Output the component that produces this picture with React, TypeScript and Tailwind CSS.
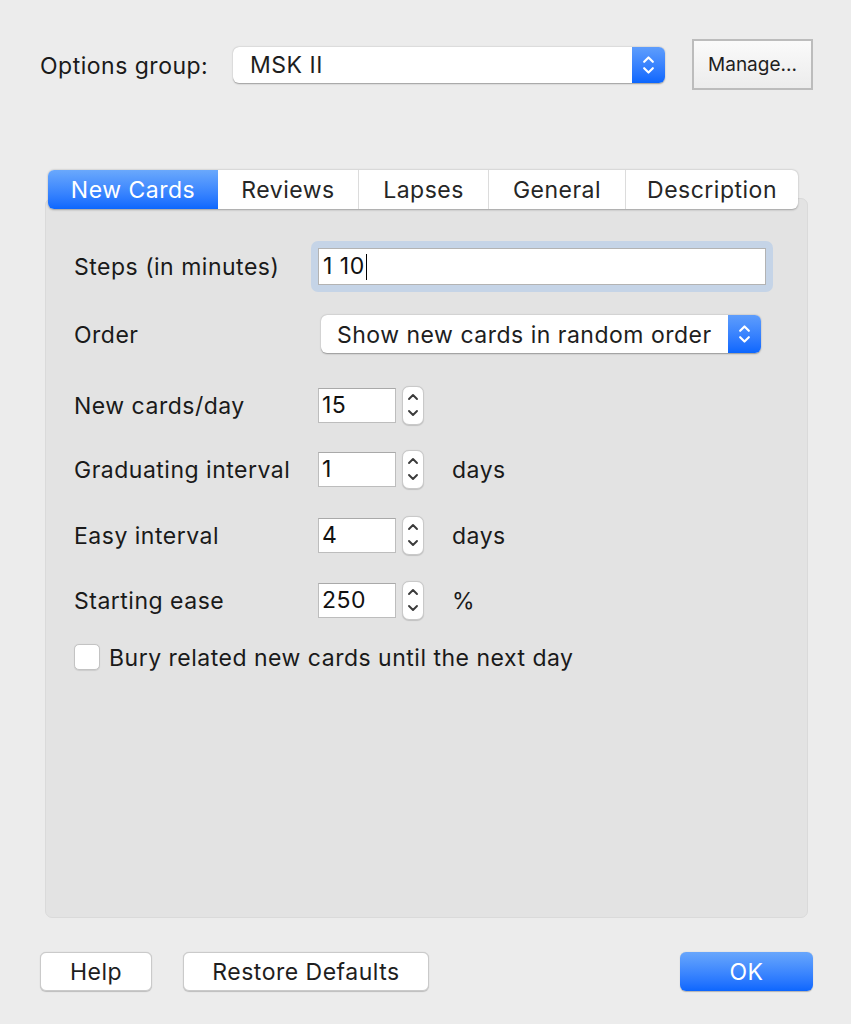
import React from "react";

const FONT = { fontFamily: "Inter, 'Noto Sans', 'Liberation Sans', sans-serif" };

function UpDown({ color = "white", w = 12, h = 22, sw = 1.8 }: { color?: string; w?: number; h?: number; sw?: number }) {
  return (
    <svg width={w} height={h} viewBox="0 0 12 22" fill="none">
      <path d="M2 8 L6 4 L10 8" stroke={color} strokeWidth={sw} strokeLinecap="round" strokeLinejoin="round" />
      <path d="M2 14 L6 18 L10 14" stroke={color} strokeWidth={sw} strokeLinecap="round" strokeLinejoin="round" />
    </svg>
  );
}

function PopUp({ value, width, height, textPad }: { value: string; width: number; height: number; textPad: number }) {
  return (
    <div
      className="flex items-stretch rounded-[6px] bg-white shadow-[0_0.5px_1.5px_rgba(0,0,0,0.35)] overflow-hidden"
      style={{ width, height }}
    >
      <div className="flex flex-1 items-center pt-[2px] text-[23px] text-[#1e1e1e]" style={{ paddingLeft: textPad }}>
        {value}
      </div>
      <div className="flex w-[33px] items-center justify-center bg-gradient-to-b from-[#5e9dfc] to-[#0a66fe]">
        <UpDown w={13} h={24} sw={2} />
      </div>
    </div>
  );
}

function Stepper() {
  return (
    <div className="flex h-[39px] w-[22px] items-center justify-center rounded-[7px] border border-[#c9c9c9] bg-white shadow-[0_0.5px_1px_rgba(0,0,0,0.15)]">
      <svg width="12" height="30" viewBox="0 0 12 30" fill="none">
        <path d="M2 9 L6 5 L10 9" stroke="#3a3a3a" strokeWidth="1.9" strokeLinecap="round" strokeLinejoin="round" />
        <path d="M2 21 L6 25 L10 21" stroke="#3a3a3a" strokeWidth="1.9" strokeLinecap="round" strokeLinejoin="round" />
      </svg>
    </div>
  );
}

function NumberRow({ label, value, unit, mt }: { label: string; value: string; unit?: string; mt: string }) {
  return (
    <div className={`flex h-[40px] items-center ${mt}`}>
      <div className="w-[244px] pt-[2px] text-[23px] text-[#1a1a1a]">{label}</div>
      <div className="flex h-[35px] w-[78px] items-center border border-[#bdbdbd] border-t-[#a9a9a9] bg-white pl-[3px] pt-[1px] text-[23px] text-[#111]">
        {value}
      </div>
      <div className="ml-[6px]">
        <Stepper />
      </div>
      {unit && <div className="ml-[28px] pt-[2px] text-[23px] text-[#1a1a1a]">{unit}</div>}
    </div>
  );
}

const TABS = [
  { label: "New Cards", w: 170 },
  { label: "Reviews", w: 140 },
  { label: "Lapses", w: 130 },
  { label: "General", w: 137 },
  { label: "Description", w: 173 },
];

export default function App() {
  return (
    <div className="relative h-[1024px] w-[851px] overflow-hidden bg-[#ececec] tracking-[0.5px]" style={FONT}>
      {/* Top row */}
      <div className="flex h-[51px] items-center pl-[40px] pt-0 mt-[39px]">
        <div className="w-[193px] pt-[3px] text-[23px] text-[#1a1a1a]">Options group:</div>
        <PopUp value="MSK II" width={432} height={36} textPad={17} />
        <button className="ml-[27px] flex h-[51px] w-[121px] items-center justify-center border-2 border-[#bcbcbc] bg-gradient-to-b from-[#fafafa] to-[#ececec] pt-[2px] text-[19px] tracking-normal text-[#1e1e1e]">
          Manage...
        </button>
      </div>

      {/* Tabs */}
      <div className="relative z-10 ml-[48px] mt-[80px] flex h-[39px] w-[750px] overflow-hidden rounded-[6px] bg-white shadow-[0_0.5px_2px_rgba(0,0,0,0.3)]">
        {TABS.map((t, i) => (
          <div
            key={t.label}
            className={
              i === 0
                ? "flex items-center justify-center bg-gradient-to-b from-[#6aa8fc] to-[#0b67fe] pt-[1px] text-[23px] text-white"
                : `flex items-center justify-center pt-[1px] text-[23px] text-[#262626] ${i > 1 ? "border-l border-[#dcdcdc]" : ""}`
            }
            style={{ width: t.w }}
          >
            {t.label}
          </div>
        ))}
      </div>

      {/* Panel */}
      <div className="-mt-[11px] ml-[45px] h-[720px] w-[763px] rounded-[7px] border border-[#dadada] bg-[#e3e3e3] pl-[28px] pt-[40px]">
        {/* Steps */}
        <div className="flex h-[54px] items-center">
          <div className="w-[237px] pt-[2px] text-[23px] text-[#1a1a1a]">Steps (in minutes)</div>
          <div className="rounded-[7px] bg-[#c5d4e7] p-[7px]">
            <div className="flex h-[37px] w-[448px] items-center border border-[#b3b3b3] bg-white pl-[4px] pt-[1px] text-[23px] text-[#111]">
              1 10<span className="ml-[1px] inline-block h-[26px] w-[1.5px] bg-black" />
            </div>
          </div>
        </div>

        {/* Order */}
        <div className="mt-[21px] flex h-[40px] items-center">
          <div className="w-[247px] pt-[2px] text-[23px] text-[#1a1a1a]">Order</div>
          <PopUp value="Show new cards in random order" width={440} height={38} textPad={16} />
        </div>

        <NumberRow label="New cards/day" value="15" mt="mt-[31px]" />
        <NumberRow label="Graduating interval" value="1" unit="days" mt="mt-[24px]" />
        <NumberRow label="Easy interval" value="4" unit="days" mt="mt-[26px]" />
        <NumberRow label="Starting ease" value="250" unit="%" mt="mt-[25px]" />

        {/* Checkbox */}
        <div className="mt-[17px] flex h-[40px] items-center">
          <div className="h-[26px] w-[26px] rounded-[5px] border border-[#c3c3c3] bg-white shadow-[0_0.5px_1px_rgba(0,0,0,0.1)]" />
          <div className="ml-[9px] pt-[2px] text-[23px] text-[#1a1a1a]">Bury related new cards until the next day</div>
        </div>
      </div>

      {/* Bottom buttons */}
      <div className="mt-[34px] flex h-[39px] items-center pl-[40px] pr-[38px]">
        <button className="flex h-[39px] w-[112px] items-center justify-center rounded-[6px] border border-[#cacaca] bg-white pt-[2px] text-[23px] text-[#1e1e1e] shadow-[0_0.5px_1px_rgba(0,0,0,0.2)]">
          Help
        </button>
        <button className="ml-[31px] flex h-[39px] w-[246px] items-center justify-center rounded-[6px] border border-[#cacaca] bg-white pt-[2px] text-[23px] text-[#1e1e1e] shadow-[0_0.5px_1px_rgba(0,0,0,0.2)]">
          Restore Defaults
        </button>
        <div className="flex-1" />
        <button className="flex h-[39px] w-[133px] items-center justify-center rounded-[6px] bg-gradient-to-b from-[#68a6fc] to-[#0b66fe] pt-[2px] text-[23px] text-white shadow-[0_0.5px_1px_rgba(0,0,0,0.25)]">
          OK
        </button>
      </div>
    </div>
  );
}
